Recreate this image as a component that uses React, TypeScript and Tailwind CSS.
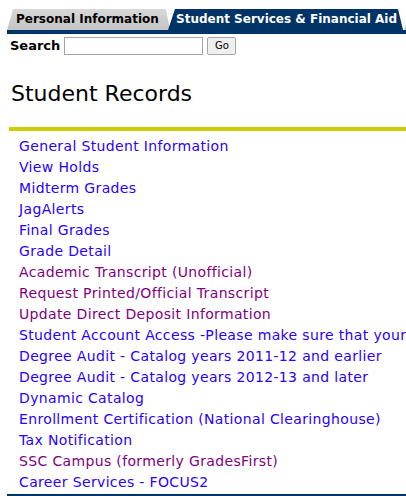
import React from "react";

const links = [
  { name: "General Student Information", visited: false },
  { name: "View Holds", visited: false },
  { name: "Midterm Grades", visited: false },
  { name: "JagAlerts", visited: false },
  { name: "Final Grades", visited: false },
  { name: "Grade Detail", visited: false },
  { name: "Academic Transcript (Unofficial)", visited: true },
  { name: "Request Printed/Official Transcript", visited: true },
  { name: "Update Direct Deposit Information", visited: true },
  { name: "Student Account Access -Please make sure that your pop-up blocker is disabled", visited: false },
  { name: "Degree Audit - Catalog years 2011-12 and earlier", visited: false },
  { name: "Degree Audit - Catalog years 2012-13 and later", visited: false },
  { name: "Dynamic Catalog", visited: false },
  { name: "Enrollment Certification (National Clearinghouse)", visited: false },
  { name: "Tax Notification", visited: false },
  { name: "SSC Campus (formerly GradesFirst)", visited: true },
  { name: "Career Services - FOCUS2", visited: false },
];

const App = () => {
  return (
    <div className="w-[406px] h-[496px] overflow-hidden bg-white pt-[9px] pl-[7px] font-['DejaVu_Sans',Verdana,sans-serif]">
      {/* Tabs */}
      <div className="flex h-[21px] items-end">
        <div className="w-[163px] h-[21px] shrink-0 rounded-t-[6px] bg-gradient-to-b from-[#d8d8d8] to-[#c4c4c4] [clip-path:polygon(0_100%,6px_0,calc(100%-4px)_0,100%_100%)] pl-[9px] text-[12px] font-bold leading-[21px] text-black whitespace-nowrap">
          Personal Information
        </div>
        <div className="-ml-[2px] w-[235px] h-[21px] shrink-0 rounded-t-[6px] bg-[#003366] [clip-path:polygon(0_100%,7px_0,calc(100%-5px)_0,100%_100%)] pl-[8px] text-[12px] font-bold leading-[21px] text-white whitespace-nowrap">
          Student Services &amp; Financial Aid
        </div>
        <div className="ml-[1px] w-[10px] h-[14px] shrink-0 bg-[#cfcfcf] [clip-path:polygon(0_100%,4px_0,100%_0,100%_100%)]" />
      </div>
      <div className="h-[4px] bg-[#003366]" />

      {/* Search */}
      <div className="mt-[3px] flex items-center h-[18px] pl-[3px]">
        <span className="text-[13px] font-bold text-black mr-[4px]">Search</span>
        <input className="w-[139px] h-[18px] border border-[#a5a5a5] bg-white" />
        <button className="ml-[4px] w-[29px] h-[18px] border border-[#a5a5a5] rounded-[2px] bg-[#efefef] text-[10px] leading-none text-black">
          Go
        </button>
      </div>

      {/* Heading */}
      <h1 className="mt-[26px] pl-[4px] text-[22px] leading-[26px] font-normal text-black">
        Student Records
      </h1>
      <div className="mt-[20px] ml-[2px] h-[4px] bg-[#cccc00]" />

      {/* Links */}
      <ul className="mt-[5px] pl-[12px] overflow-hidden">
        {links.map((link) => (
          <li key={link.name} className="h-[21px] leading-[21px] text-[14px] tracking-[0.35px] whitespace-nowrap">
            <a
              href="#"
              className={link.visited ? "text-[#800080]" : "text-[#2a00ff]"}
            >
              {link.name}
            </a>
          </li>
        ))}
      </ul>
      <div className="mt-[1px] h-[4px] bg-[#003366]" />
    </div>
  );
};

export default App;
